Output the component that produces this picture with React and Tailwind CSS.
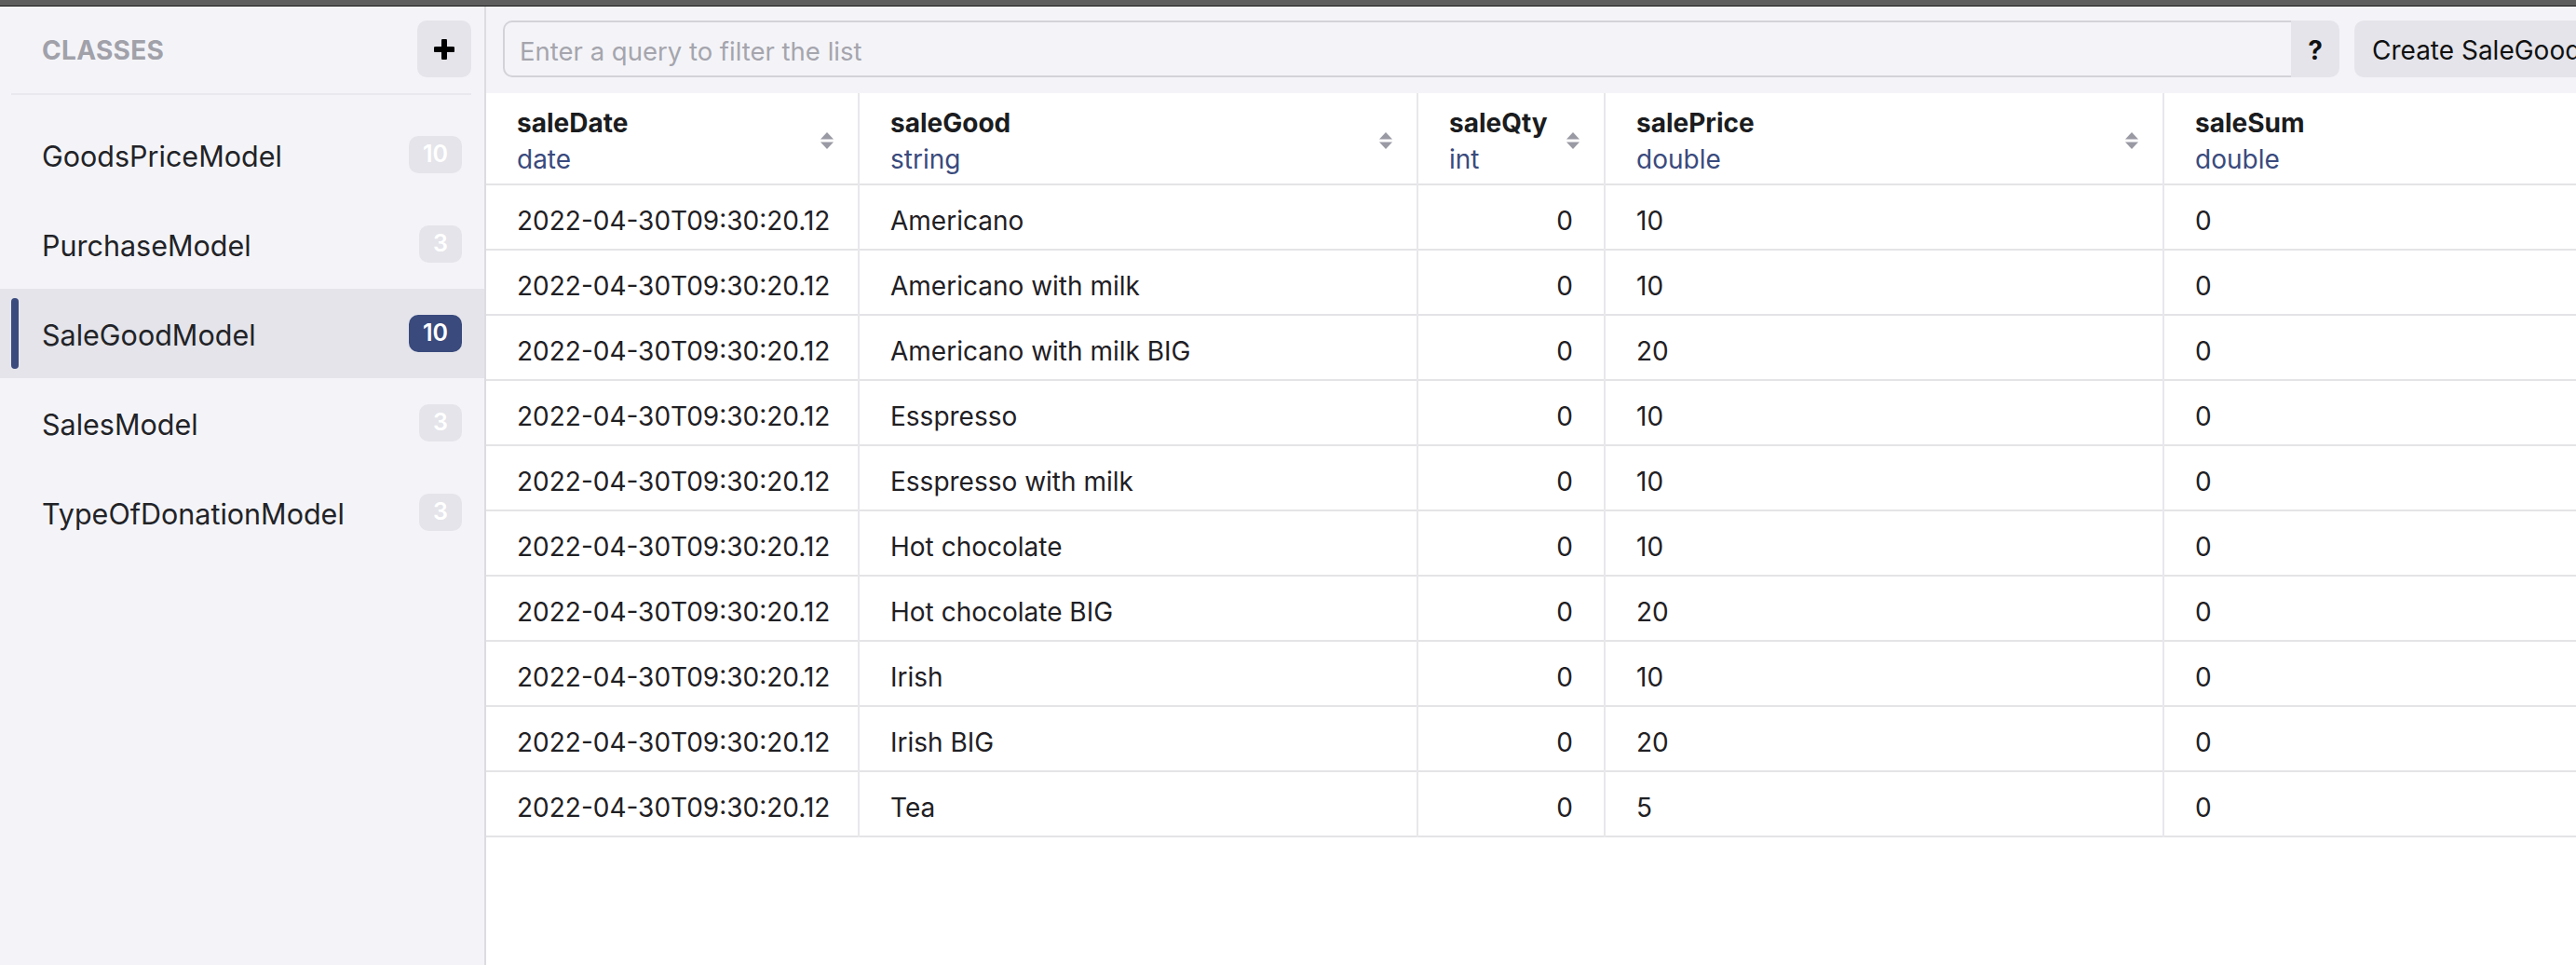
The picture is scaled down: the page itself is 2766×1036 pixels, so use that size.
import { useState } from 'react';

const classes = [
  { name: 'GoodsPriceModel', count: 10 },
  { name: 'PurchaseModel', count: 3 },
  { name: 'SaleGoodModel', count: 10 },
  { name: 'SalesModel', count: 3 },
  { name: 'TypeOfDonationModel', count: 3 },
];

const columns = [
  { key: 'saleDate', type: 'date', width: 'w-[400px]', sort: true },
  { key: 'saleGood', type: 'string', width: 'w-[600px]', sort: true },
  { key: 'saleQty', type: 'int', width: 'w-[201px]', sort: true, right: true },
  { key: 'salePrice', type: 'double', width: 'w-[600px]', sort: true },
  { key: 'saleSum', type: 'double', width: 'w-[600px]', sort: false },
];

const rows = [
  ['Americano', 10],
  ['Americano with milk', 10],
  ['Americano with milk BIG', 20],
  ['Esspresso', 10],
  ['Esspresso with milk', 10],
  ['Hot chocolate', 10],
  ['Hot chocolate BIG', 20],
  ['Irish', 10],
  ['Irish BIG', 20],
  ['Tea', 5],
].map(([good, price]) => ({
  saleDate: '2022-04-30T09:30:20.12',
  saleGood: good,
  saleQty: 0,
  salePrice: price,
  saleSum: 0,
}));

function SortIcon() {
  return (
    <svg width="14" height="19" viewBox="0 0 14 19" className="shrink-0">
      <path d="M7 0 L14 7.5 H0 Z" fill="#9a9aa5" />
      <path d="M0 10.5 H14 L7 18 Z" fill="#9a9aa5" />
    </svg>
  );
}

export default function App() {
  const [active, setActive] = useState('SaleGoodModel');
  const [query, setQuery] = useState('');

  return (
    <div className="h-[1036px] w-full flex flex-col overflow-hidden bg-[#f4f4f8] text-[#1f2024] font-['Inter','Liberation_Sans',sans-serif]">
      {/* window chrome strip */}
      <div className="h-[7px] shrink-0 bg-[#5e5e5e] border-b border-[#1a1a1a]" />

      <div className="flex flex-1 min-h-0">
        {/* Sidebar */}
        <aside className="w-[522px] shrink-0 border-r-2 border-[#dcdce1] bg-[#f4f4f8]">
          <div className="ml-[12px] mr-[14px] pt-[15px] pb-[17px] border-b-2 border-[#e8e8ee] flex items-center justify-between">
            <span className="pl-[33px] pt-[3px] text-[28px] font-bold text-[#a1a1aa] tracking-[0.3px]">CLASSES</span>
            <button className="w-[58px] h-[61px] rounded-[10px] bg-[#e4e4ea] flex items-center justify-center">
              <svg width="22" height="22" viewBox="0 0 22 22">
                <path d="M11 2 V20 M2 11 H20" stroke="#000" strokeWidth="6" strokeLinecap="round" />
              </svg>
            </button>
          </div>

          <ul className="pt-[16px]">
            {classes.map((c) => {
              const isActive = c.name === active;
              return (
                <li
                  key={c.name}
                  onClick={() => setActive(c.name)}
                  className={`relative h-[96px] flex items-center justify-between pl-[45px] pr-[24px] cursor-pointer ${
                    isActive ? 'bg-[#e4e4ea]' : ''
                  }`}
                >
                  {isActive && (
                    <span className="absolute left-[12px] top-[10px] bottom-[10px] w-[8px] rounded-full bg-[#3a4a7d]" />
                  )}
                  <span className="pt-[3px] text-[30.5px] text-[#222327]">{c.name}</span>
                  <span
                    className={`h-[40px] px-[15px] rounded-[10px] flex items-center text-[25px] font-semibold ${
                      isActive ? 'bg-[#3a4a7d] text-white' : 'bg-[#e4e4ea] text-white'
                    }`}
                  >
                    {c.count}
                  </span>
                </li>
              );
            })}
          </ul>
        </aside>

        {/* Main */}
        <main className="flex-1 min-w-0 flex flex-col overflow-hidden">
          <div className="flex items-center pl-[18px] pt-[15px] pb-[17px] gap-[16px]">
            <div className="w-[1972px] shrink-0 h-[61px] flex">
              <input
                value={query}
                onChange={(e) => setQuery(e.target.value)}
                placeholder="Enter a query to filter the list"
                className="flex-1 min-w-0 h-full rounded-l-[10px] border-2 border-r-0 border-[#d2d2d8] bg-[#f4f4f8] pl-[16px] pt-[4px] text-[27.5px] placeholder:text-[#a5a5ad] outline-none"
              />
              <button className="w-[52px] h-full pt-[3px] rounded-r-[10px] bg-[#e4e4ea] text-[28px] font-bold text-[#111]">?</button>
            </div>
            <button className="shrink-0 h-[61px] px-[19px] pt-[3px] rounded-[10px] bg-[#e4e4ea] text-[28px] text-[#111] whitespace-nowrap">
              Create SaleGoodModel
            </button>
          </div>

          <div className="flex-1 bg-white overflow-hidden">
            <table className="table-fixed border-collapse w-[2401px] text-[28px]">
              <colgroup>
                {columns.map((col) => (
                  <col key={col.key} className={col.width} />
                ))}
              </colgroup>
              <thead>
                <tr className="h-[98px] border-b-2 border-[#e4e4e7]">
                  {columns.map((col, i) => (
                    <th
                      key={col.key}
                      className={`text-left font-normal align-middle pl-[33px] pr-[26px] pt-[6px] ${i > 0 ? 'border-l-2 border-[#e8e8eb]' : ''}`}
                    >
                      <div className="flex items-center justify-between">
                        <div className="flex flex-col leading-[39px]">
                          <span className="font-bold text-[#1b1c20]">{col.key}</span>
                          <span className="text-[#3a4a7d]">{col.type}</span>
                        </div>
                        {col.sort && <SortIcon />}
                      </div>
                    </th>
                  ))}
                </tr>
              </thead>
              <tbody>
                {rows.map((r, idx) => (
                  <tr key={idx} className="h-[70px] border-b-2 border-[#e4e4e7]">
                    {columns.map((col, i) => (
                      <td
                        key={col.key}
                        className={`px-[33px] pt-[7px] whitespace-nowrap text-[#1f2024] ${col.right ? 'text-right' : 'text-left'} ${
                          i > 0 ? 'border-l-2 border-[#e8e8eb]' : ''
                        }`}
                      >
                        {r[col.key]}
                      </td>
                    ))}
                  </tr>
                ))}
              </tbody>
            </table>
          </div>
        </main>
      </div>
    </div>
  );
}
